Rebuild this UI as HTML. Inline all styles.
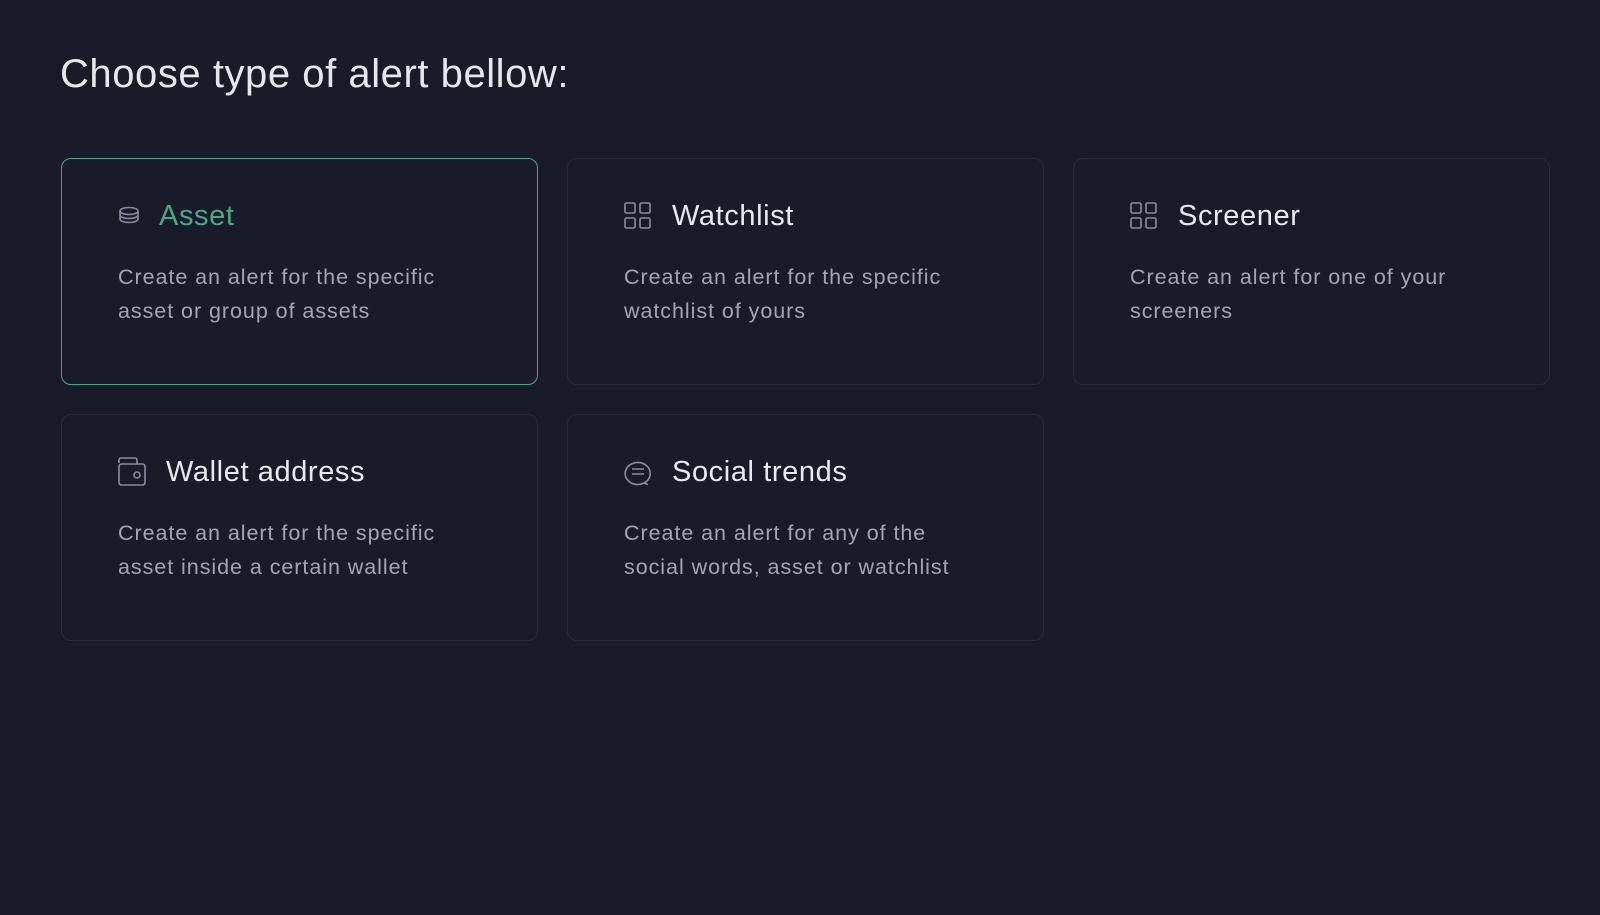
<!DOCTYPE html>
<html><head><style>
body{margin:0;width:1600px;height:915px;background:#1a1b29;font-family:"Liberation Sans",sans-serif;overflow:hidden;position:relative}
h1{position:absolute;left:60px;top:52px;margin:0;font-weight:400;font-size:40px;color:#e6e7ee;letter-spacing:0.55px}
.card{position:absolute;width:475px;height:225px;border:1px solid #272938;border-radius:10px;box-sizing:content-box}
.card.sel{border:1.5px solid #4aa982}
.t{position:absolute;top:37px;left:0;height:40px;display:flex;align-items:center;font-size:29px;color:#e8e9f0;letter-spacing:0.6px}
.t svg{position:absolute;left:56px}
.t span{position:absolute;white-space:nowrap}
.d{position:absolute;left:56px;top:101px;font-size:21.5px;line-height:34px;color:#a3a5b7;letter-spacing:0.95px}
</style></head><body>
<h1>Choose type of alert bellow:</h1>

<div class="card sel" style="left:61px;top:158px">
<div class="t"><svg width="22" height="22" viewBox="0 0 22 22" fill="none" stroke="#8a8ca0" stroke-width="1.6"><ellipse cx="11" cy="6" rx="9" ry="3.5"/><path d="M2 6v4c0 2 4 3.5 9 3.5s9-1.5 9-3.5V6M2 10v4c0 2 4 3.5 9 3.5s9-1.5 9-3.5v-4"/></svg><span style="left:97px;color:#4aa982">Asset</span></div>
<div class="d">Create an alert for the specific<br>asset or group of assets</div></div>

<div class="card" style="left:567px;top:158px">
<div class="t"><svg width="28" height="28" viewBox="0 0 28 28" fill="none" stroke="#8a8ca0" stroke-width="1.6"><rect x="1" y="1" width="10" height="10" rx="1.5"/><rect x="16" y="1" width="10" height="10" rx="1.5"/><rect x="1" y="16" width="10" height="10" rx="1.5"/><rect x="16" y="16" width="10" height="10" rx="1.5"/></svg><span style="left:104px">Watchlist</span></div>
<div class="d">Create an alert for the specific<br>watchlist of yours</div></div>

<div class="card" style="left:1073px;top:158px">
<div class="t"><svg width="28" height="28" viewBox="0 0 28 28" fill="none" stroke="#8a8ca0" stroke-width="1.6"><rect x="1" y="1" width="10" height="10" rx="1.5"/><rect x="16" y="1" width="10" height="10" rx="1.5"/><rect x="1" y="16" width="10" height="10" rx="1.5"/><rect x="16" y="16" width="10" height="10" rx="1.5"/></svg><span style="left:104px">Screener</span></div>
<div class="d">Create an alert for one of your<br>screeners</div></div>

<div class="card" style="left:61px;top:414px">
<div class="t"><svg width="28" height="30" viewBox="0 0 28 30" fill="none" stroke="#8a8ca0" stroke-width="1.6"><path d="M1 6V3a2 2 0 0 1 2-2h14a2 2 0 0 1 2 2v4"/><rect x="1" y="7" width="26" height="21" rx="2.5"/><circle cx="19" cy="18" r="3"/></svg><span style="left:104px">Wallet address</span></div>
<div class="d">Create an alert for the specific<br>asset inside a certain wallet</div></div>

<div class="card" style="left:567px;top:414px">
<div class="t"><svg width="28" height="28" viewBox="0 0 28 28" fill="none" stroke="#8a8ca0" stroke-width="1.6"><path d="M20 25a12.5 11 0 1 0-6 1.5c2 0 4-.5 6-1.5l4 1.5z"/><path d="M8 11h12M8 16h12"/></svg><span style="left:104px">Social trends</span></div>
<div class="d">Create an alert for any of the<br>social words, asset or watchlist</div></div>
</body></html>
